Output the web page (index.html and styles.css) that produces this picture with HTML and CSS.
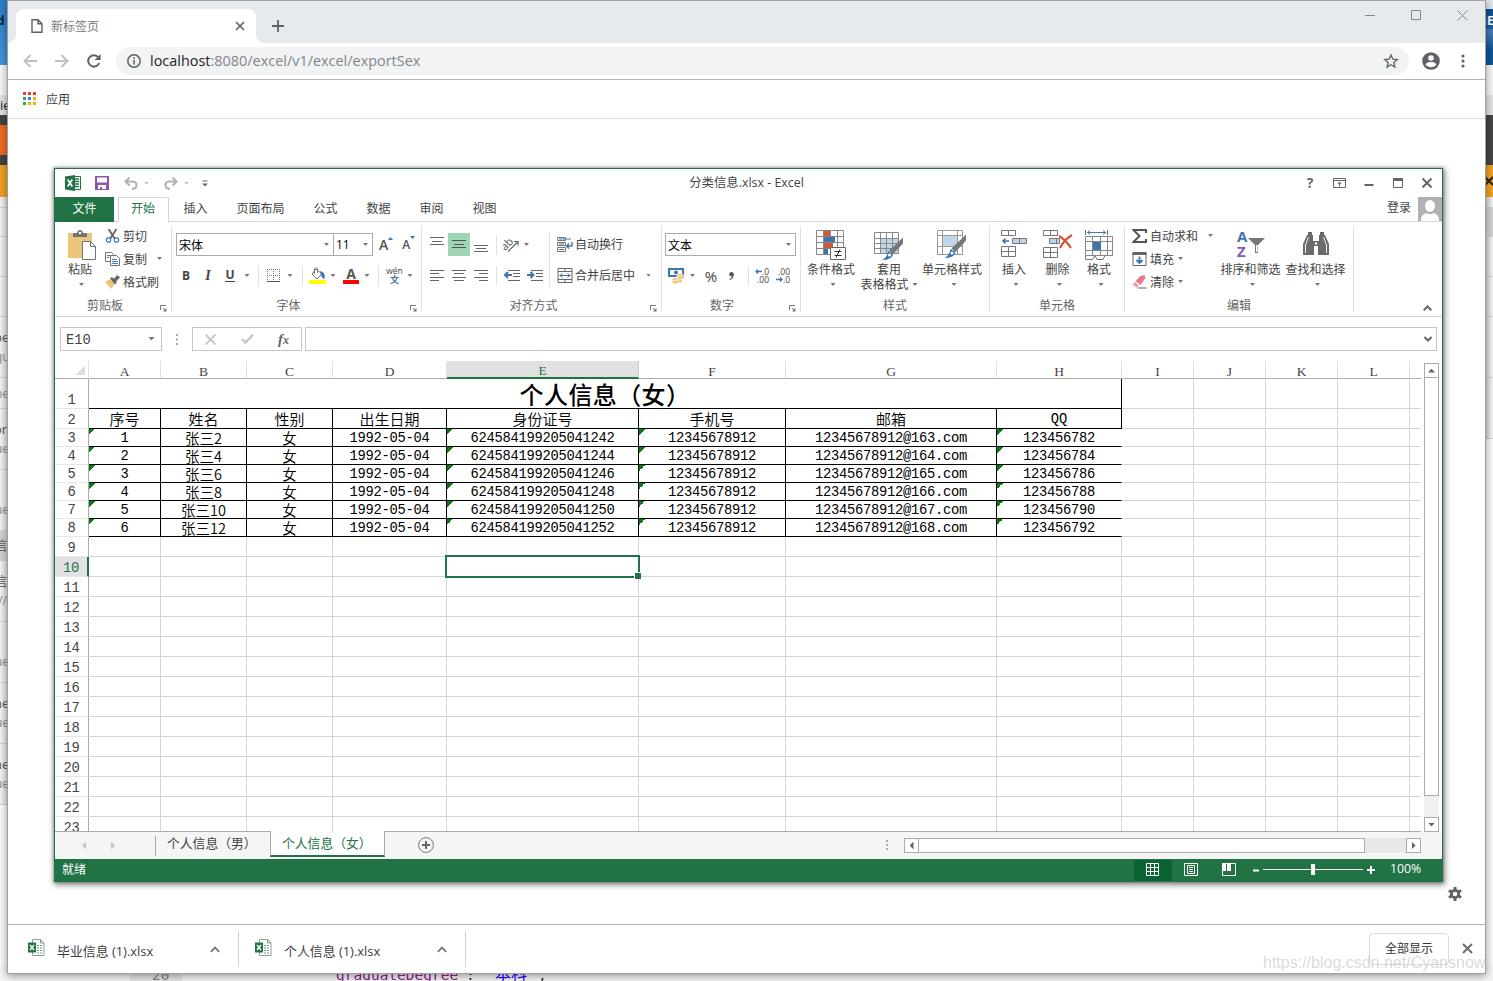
FILE: index.html
```html
<!DOCTYPE html>
<html lang="zh-CN">
<head>
  <meta charset="utf-8"/>
  <title>新标签页</title>
  <link rel="stylesheet" href="styles.css">
</head>
<body>
<div class="desktop">

  <!-- Windows behind the browser -->
  <div class="behind behind-left">
    <div class="b-blue">d</div>
    <div class="b-pale"></div>
    <div class="b-tool">ie</div>
    <div class="b-dark"></div>
    <div class="b-orange"></div>
    <div class="b-dark"></div>
    <div class="b-amber"></div>
    <div class="b-row h10"></div>
    <div class="b-row h29"></div>
    <div class="b-row h40"></div>
    <div class="b-row h40"></div>
    <div class="b-row h61"><b>pe</b><span>qu</span></div>
    <div class="b-row h31"><span>ne</span></div>
    <div class="b-row h61"><b>or</b><span>ue</span></div>
    <div class="b-row h61"><i></i><span>ue</span></div>
    <div class="b-row h30 sel"><b>信息</b></div>
    <div class="b-row h61"><b>信息</b><span>://</span></div>
    <div class="b-row h61"><i></i><span>ue</span></div>
    <div class="b-row h61"><b>ne</b><span>ue</span></div>
    <div class="b-row h61"><b>he</b><span>ue</span></div>
  </div>
  <div class="behind behind-right">
    <div class="b-blue deep">hE</div>
    <div class="b-pale"></div>
    <div class="b-tool"></div>
    <div class="b-dark tall"></div>
    <div class="b-amber"><svg width="8" height="10" viewBox="0 0 8 10"><path d="M0 1l8 8M8 1L0 9" stroke="#222" stroke-width="2"/></svg></div>
    <div class="b-row h10"></div>
    <div class="b-row h29 sel"></div>
    <div class="b-row h40"></div>
    <div class="b-row h40"></div>
    <div class="b-row h61"></div>
    <div class="b-row h61"></div>
  </div>
  <div class="behind behind-bottom">
    <span class="code-no">20</span>
    <span class="code-key">graduateDegree</span>
    <span class="code-colon">:</span>
    <span class="code-val">本科</span>
    <span>,</span>
  </div>

  <!-- Browser window -->
  <div class="browser">
    <div class="tabstrip">
      <div class="tab">
        <svg class="page-icon" width="12" height="14" viewBox="0 0 12 14"><path d="M1 .8h6l4 4v8.4H1zM7 .8v4h4" fill="none" stroke="#5f6368" stroke-width="1.4"/></svg>
        <span class="tab-title">新标签页</span>
        <svg width="10" height="10" viewBox="0 0 10 10"><path d="M1 1l8 8M9 1L1 9" stroke="#5f6368" stroke-width="1.7"/></svg>
      </div>
      <svg class="new-tab" width="12" height="12" viewBox="0 0 12 12"><path d="M6 0v12M0 6h12" stroke="#5f6368" stroke-width="1.8"/></svg>
      <div class="win-controls">
        <svg width="11" height="11" viewBox="0 0 11 11"><path d="M0 5.5h10" stroke="#888"/></svg>
        <svg width="11" height="11" viewBox="0 0 11 11"><path d="M.5.5h9v9h-9z" fill="none" stroke="#888"/></svg>
        <svg width="11" height="11" viewBox="0 0 11 11"><path d="M.5.5l10 10M10.5.5l-10 10" stroke="#888"/></svg>
      </div>
    </div>

    <div class="toolbar">
      <svg width="14" height="14" viewBox="0 0 14 14"><path d="M14 7H1.5M7.5 1L1.5 7l6 6" fill="none" stroke="#bdbfc1" stroke-width="1.9"/></svg>
      <svg width="14" height="14" viewBox="0 0 14 14"><path d="M0 7h12.5M6.5 1l6 6-6 6" fill="none" stroke="#bdbfc1" stroke-width="1.9"/></svg>
      <svg width="14" height="14" viewBox="0 0 14 14"><path d="M12.2 9A5.7 5.7 0 1 1 11.4 3.4" fill="none" stroke="#5f6368" stroke-width="2"/><path d="M13.6 0v6H7.6z" fill="#5f6368"/></svg>
      <div class="omnibox">
        <svg width="14" height="14" viewBox="0 0 14 14"><circle cx="7" cy="7" r="6.2" fill="none" stroke="#5f6368" stroke-width="1.5"/><path d="M7 6v4.5M7 3.2v1.7" stroke="#5f6368" stroke-width="1.6"/></svg>
        <span class="url">localhost<em>:8080/excel/v1/excel/exportSex</em></span>
        <svg width="16" height="16" viewBox="0 0 24 24"><path d="M12 3l2.7 6.3 6.8.6-5.2 4.5 1.6 6.6L12 17.5 6.1 21l1.6-6.6L2.5 9.9l6.8-.6z" fill="none" stroke="#5f6368" stroke-width="2"/></svg>
      </div>
      <svg class="profile" width="18" height="18" viewBox="0 0 18 18"><circle cx="9" cy="9" r="8.8" fill="#5f6368"/><circle cx="9" cy="6" r="2.8" fill="#fff"/><path d="M3.5 12.5c1.2-1.9 3.4-2.5 5.5-2.5s4.3.6 5.5 2.5c-1.3 1.8-3.3 2.8-5.5 2.8s-4.2-1-5.5-2.8z" fill="#fff"/></svg>
      <svg class="kebab" width="4" height="14" viewBox="0 0 4 14"><g fill="#5f6368"><circle cx="2" cy="2" r="1.6"/><circle cx="2" cy="7" r="1.6"/><circle cx="2" cy="12" r="1.6"/></g></svg>
    </div>

    <div class="bookmarks">
      <svg width="13" height="13" viewBox="0 0 13 13"><path d="M0 0h3v3H0zM5 0h3v3H5zM10 0h3v3h-3z" fill="#ea4335"/><path d="M0 5h3v3H0zM0 10h3v3H0z" fill="#34a853"/><path d="M5 5h3v3H5z" fill="#1a89f4"/><path d="M10 5h3v3h-3zM5 10h3v3H5zM10 10h3v3h-3z" fill="#fbaf05"/></svg>
      <span>应用</span>
    </div>

    <div class="page">
      <!-- Excel window -->
      <div class="excel">
        <div class="titlebar">
          <div class="quick">
            <svg width="16" height="16" viewBox="0 0 16 16"><path d="M8 1.5h7.5v13H8z" fill="#fff" stroke="#217346"/><path d="M10 4h4M10 6.5h4M10 9h4M10 11.5h4" stroke="#217346" stroke-width="1.3"/><path d="M0 1.5L10 0v16L0 14.5z" fill="#217346"/><path d="M2.7 4.5l4.6 7M7.3 4.5l-4.6 7" stroke="#fff" stroke-width="1.7"/></svg>
            <svg width="14" height="14" viewBox="0 0 14 14"><path d="M0 0h14v14H0z" fill="#8a57ab"/><path d="M2 1.5h10v5H2zM3 9h8v4H3z" fill="#fff"/><path d="M5 11h2v2H5z" fill="#8a57ab"/></svg>
            <svg width="14" height="13" viewBox="0 0 14 13"><path d="M5.5.5L1.5 4.5l4 4M1.5 4.5h7q4 0 4 3.5T8 12" fill="none" stroke="#b3b3b3" stroke-width="2.1"/></svg>
            <i class="arrow pale"></i>
            <svg width="14" height="13" viewBox="0 0 14 13"><path d="M8.5.5l4 4-4 4M12.5 4.5h-7q-4 0-4 3.5T6 12" fill="none" stroke="#b3b3b3" stroke-width="2.1"/></svg>
            <i class="arrow pale"></i>
            <svg width="6" height="7" viewBox="0 0 6 7"><path d="M.5 1h5" stroke="#666"/><path d="M0 3.5h6l-3 3z" fill="#666"/></svg>
          </div>
          <div class="book-name">分类信息.xlsx - Excel</div>
          <div class="excel-controls">
            <span class="help">?</span>
            <svg width="13" height="10" viewBox="0 0 13 10"><path d="M.5.5h12v9H.5zM.5 2.5h12M6.5 8.5V4M4.5 6l2-2 2 2" fill="none" stroke="#666"/></svg>
            <svg width="10" height="10" viewBox="0 0 10 10"><path d="M.5 7h9" stroke="#666" stroke-width="2"/></svg>
            <svg width="10" height="10" viewBox="0 0 10 10"><path d="M.5.5h9v9h-9z" fill="none" stroke="#666"/><path d="M0 0h10v3H0z" fill="#666"/></svg>
            <svg width="10" height="10" viewBox="0 0 10 10"><path d="M.5.5l9 9M9.5.5l-9 9" stroke="#666" stroke-width="2"/></svg>
          </div>
        </div>

        <div class="ribbon-tabs">
          <span class="file">文件</span>
          <span class="current">开始</span>
          <span>插入</span>
          <span class="wide">页面布局</span>
          <span>公式</span>
          <span>数据</span>
          <span>审阅</span>
          <span>视图</span>
          <div class="login">登录</div>
          <svg width="24" height="24" viewBox="0 0 24 24"><path d="M0 0h24v24H0z" fill="#b1b1b1"/><ellipse cx="12" cy="9" rx="5" ry="6" fill="#fff"/><path d="M3 24c0-5 2-7 5.5-8q3.5 2.5 7 0c3.5 1 5.5 3 5.5 8z" fill="#fff"/></svg>
        </div>

        <div class="ribbon">
          <!-- Clipboard -->
          <div class="group g-clip">
            <div class="group-body">
              <div class="big">
                <svg width="28" height="30" viewBox="0 0 28 30"><path d="M0 3h24v25H0z" fill="#ecc57c"/><path d="M5 7V3h4c0-4 6-4 6 0h4v4z" fill="#737373"/><circle cx="12" cy="3" r="1.3" fill="#fff"/><path d="M14.5 11.5h8l5 5v13h-13z" fill="#fff" stroke="#737373"/><path d="M22.5 11.5v5h5" fill="none" stroke="#737373"/></svg>
                <span>粘贴</span><i class="arrow"></i>
              </div>
              <div class="small-list">
                <div><svg width="14" height="14" viewBox="0 0 14 14"><path d="M3 0l6.5 10M11 0L4.5 10" stroke="#666" stroke-width="1.9"/><circle cx="3" cy="11" r="2.2" fill="none" stroke="#4a7eb5" stroke-width="1.3"/><circle cx="11" cy="11" r="2.2" fill="none" stroke="#4a7eb5" stroke-width="1.3"/></svg><span>剪切</span></div>
                <div><svg width="15" height="14" viewBox="0 0 15 14"><path d="M.5.5h6l2 2v7h-8z" fill="#fff" stroke="#737373"/><path d="M5.5 3.5h6l3 3v7h-9z" fill="#fff" stroke="#737373"/><path d="M2 3.5h3M2 5.5h2M7 7.5h5M7 9.5h6M7 11.5h6" stroke="#4a7eb5"/></svg><span>复制</span><i class="arrow"></i></div>
                <div><svg width="15" height="14" viewBox="0 0 15 14"><path d="M0 7l5-3 5 5-4 5z" fill="#ecc57c"/><path d="M5 3.5l2-1.5 5 5-2 2.5zM8.5 4l4-4L15 2.5l-4 4z" fill="#666"/></svg><span>格式刷</span></div>
              </div>
            </div>
            <div class="group-name">剪贴板<svg class="launcher" width="7" height="7" viewBox="0 0 7 7"><path d="M.5 5V.5H6M3 3l3 3" fill="none" stroke="#777"/><path d="M6.5 3v3.5H3z" fill="#777"/></svg></div>
          </div>

          <!-- Font -->
          <div class="group g-font">
            <div class="group-body col">
              <div class="row font-row">
                <div class="combo"><span>宋体</span><i class="arrow"></i></div>
                <div class="combo"><span>11</span><i class="arrow"></i></div>
                <span class="grow">A<svg width="5" height="3" viewBox="0 0 5 3"><path d="M0 3h5L2.5 0z" fill="#3f74ae"/></svg></span>
                <span class="grow less">A<svg width="5" height="3" viewBox="0 0 5 3"><path d="M0 0h5L2.5 3z" fill="#3f74ae"/></svg></span>
              </div>
              <div class="row style-row">
                <b>B</b><b class="ital">I</b><b class="under">U</b><i class="arrow"></i><i class="sep"></i>
                <svg width="13" height="13" viewBox="0 0 13 13"><path d="M.5 0v13M6.5 0v13M12.5 0v13M0 .5h13M0 6.5h13" stroke="#777" stroke-dasharray="1 1"/><path d="M0 12.5h13" stroke="#555"/></svg>
                <i class="arrow"></i><i class="sep"></i>
                <svg width="17" height="17" viewBox="0 0 17 17"><path d="M7 2l6 5-5 5-5-5z" fill="#fff" stroke="#737373"/><path d="M5.5 7V2q1.5-3 3 0v4" fill="none" stroke="#737373"/><path d="M11 4q6 1 4.5 8Q12 11 11 4z" fill="#3f74ae"/><path d="M0 13h17v4H0z" fill="#ff0"/></svg>
                <i class="arrow"></i>
                <span class="font-colour">A</span>
                <i class="arrow"></i><i class="sep"></i>
                <span class="phonetic">wén<em>文</em></span><i class="arrow"></i>
              </div>
            </div>
            <div class="group-name">字体<svg class="launcher" width="7" height="7" viewBox="0 0 7 7"><path d="M.5 5V.5H6M3 3l3 3" fill="none" stroke="#777"/><path d="M6.5 3v3.5H3z" fill="#777"/></svg></div>
          </div>

          <!-- Alignment -->
          <div class="group g-align">
            <div class="group-body">
              <div class="align-grid">
                <span class="cell"><svg width="14" height="15" viewBox="0 0 14 15"><path d="M0 .5h14M2 4.5h10M0 7.5h14" stroke="#666"/></svg></span>
                <span class="cell on"><svg width="14" height="15" viewBox="0 0 14 15"><path d="M0 3.5h14M2 7.5h10M0 10.5h14" stroke="#555"/></svg></span>
                <span class="cell"><svg width="14" height="15" viewBox="0 0 14 15"><path d="M0 8.5h14M2 11.5h10M0 14.5h14" stroke="#666"/></svg></span>
                <i class="sep"></i>
                <span class="cell"><svg width="17" height="16" viewBox="0 0 17 16"><g transform="rotate(-45 7 8)"><text x="-1" y="9" class="ab">ab</text></g><path d="M5 14.5L15 4.5M11 4.5h4v4" fill="none" stroke="#666" stroke-width="1.2"/></svg></span>
                <i class="arrow lead"></i>
                <span class="cell"><svg width="14" height="11" viewBox="0 0 14 11"><path d="M0 .5h14M0 3.5h9M0 7.5h14M0 10.5h9" stroke="#666"/></svg></span>
                <span class="cell"><svg width="14" height="11" viewBox="0 0 14 11"><path d="M0 .5h14M2 3.5h10M0 7.5h14M2 10.5h10" stroke="#666"/></svg></span>
                <span class="cell"><svg width="14" height="11" viewBox="0 0 14 11"><path d="M0 .5h14M5 3.5h9M0 7.5h14M5 10.5h9" stroke="#666"/></svg></span>
                <i class="sep"></i>
                <span class="cell"><svg width="16" height="11" viewBox="0 0 16 11"><path d="M4 .5h12M9 3.5h7M9 6.5h7M4 10.5h12" stroke="#666"/><path d="M8 5H1M4 2L1 5l3 3" fill="none" stroke="#3f74ae" stroke-width="2"/></svg></span>
                <span class="cell"><svg width="16" height="11" viewBox="0 0 16 11"><path d="M4 .5h12M9 3.5h7M9 6.5h7M4 10.5h12" stroke="#666"/><path d="M0 5h6M3.5 2l3 3-3 3" fill="none" stroke="#3f74ae" stroke-width="2"/></svg></span>
              </div>
              <div class="wrap-list">
                <div><svg width="16" height="15" viewBox="0 0 16 15"><path d="M.5.5h8v3h-8zM.5 5.5h8v3h-8zM.5 10.5h8v4h-8z" fill="#fff" stroke="#777"/><path d="M2 2h12M2 7h5M2 12.5h5" stroke="#3f74ae"/><path d="M15 5v4h-5M12 6.5L9.5 9l2.5 2.5" fill="none" stroke="#3f74ae" stroke-width="1.4"/></svg><span>自动换行</span></div>
                <div><svg width="15" height="15" viewBox="0 0 15 15"><path d="M.5.5h14v14H.5zM.5 3.5h14M.5 11.5h14M7.5.5v3M7.5 11.5v3" fill="#fff" stroke="#666"/><path d="M2 7.5h11M5 5.5l-2.500 2L5 9.500M10 5.500l2.500 2-2.500 2" fill="none" stroke="#3f74ae"/></svg><span>合并后居中</span><i class="arrow"></i></div>
              </div>
            </div>
            <div class="group-name">对齐方式<svg class="launcher" width="7" height="7" viewBox="0 0 7 7"><path d="M.5 5V.5H6M3 3l3 3" fill="none" stroke="#777"/><path d="M6.5 3v3.5H3z" fill="#777"/></svg></div>
          </div>

          <!-- Number -->
          <div class="group g-number">
            <div class="group-body col">
              <div class="row"><div class="combo format"><span>文本</span><i class="arrow"></i></div></div>
              <div class="row number-row">
                <svg width="16" height="16" viewBox="0 0 16 16"><path d="M0 0h16v9H0z" fill="#3f74ae"/><path d="M2 2h12v5H2z" fill="#fff"/><circle cx="8" cy="4.5" r="2" fill="#3f74ae"/><g fill="#ecc57c" stroke="#fff" stroke-width=".6"><ellipse cx="12" cy="7.5" rx="3.6" ry="1.8"/><ellipse cx="12" cy="10" rx="3.6" ry="1.8"/><ellipse cx="7.5" cy="11.5" rx="3.6" ry="1.8"/><ellipse cx="11" cy="13" rx="3.6" ry="1.8"/><ellipse cx="7.5" cy="14" rx="3.6" ry="1.8"/></g></svg>
                <i class="arrow"></i>
                <span class="percent">%</span>
                <svg width="5" height="8" viewBox="0 0 5 8"><circle cx="2.5" cy="2.3" r="2.2" fill="#555"/><path d="M4.2 2q0 4-3.5 5.5" fill="none" stroke="#555" stroke-width="1.2"/></svg>
                <i class="sep"></i>
                <span class="decimals"><span><svg width="7" height="5" viewBox="0 0 7 5"><path d="M7 2.5H1M3 .5l-2 2 2 2" fill="none" stroke="#3f74ae" stroke-width="1.3"/></svg>.0</span><span>.00</span></span>
                <span class="decimals"><span>.00</span><span><svg width="7" height="5" viewBox="0 0 7 5"><path d="M0 2.5h6M4 .5l2 2-2 2" fill="none" stroke="#3f74ae" stroke-width="1.3"/></svg>.0</span></span>
              </div>
            </div>
            <div class="group-name">数字<svg class="launcher" width="7" height="7" viewBox="0 0 7 7"><path d="M.5 5V.5H6M3 3l3 3" fill="none" stroke="#777"/><path d="M6.5 3v3.5H3z" fill="#777"/></svg></div>
          </div>

          <!-- Styles -->
          <div class="group g-styles">
            <div class="group-body">
              <div class="big">
                <svg width="30" height="30" viewBox="0 0 30 30"><path d="M.5.5h27v24H.5zM.5 6.5h27M.5 12.5h27M.5 18.5h27M7.5.5v24M14.5.5v24M21.5.5v24" fill="#fff" stroke="#888"/><path d="M8 1h6v5H8zM8 13h9v5H8z" fill="#d65532"/><path d="M8 7h11v5H8zM8 19h4v5H8z" fill="#3f74ae"/><path d="M14.5 17.5h15v12h-15z" fill="#fff" stroke="#666"/><path d="M18.5 21.5h7M18.5 25.5h7M24 19.5l-4 8" stroke="#333"/></svg>
                <span>条件格式</span><i class="arrow"></i>
              </div>
              <div class="big">
                <svg width="30" height="30" viewBox="0 0 30 30"><path d="M7 9h18v15H7z" fill="#c0d4ea"/><path d="M.5 2.5h24v21H.5zM.5 8.5h24M.5 13.5h24M.5 18.5h24M6.5 2.5v21M12.5 2.5v21M18.5 2.5v21" fill="none" stroke="#888"/><path d="M29 7.5v6L19 24l-4-3.5z" fill="#777"/><path d="M14 21l5 3q-1 6-11 6 5-2 6-9z" fill="#3f74ae"/><circle cx="15.5" cy="25" r="1.5" fill="#fff"/></svg>
                <span>套用</span><span class="second">表格格式<i class="arrow"></i></span>
              </div>
              <div class="big">
                <svg width="30" height="30" viewBox="0 0 30 30"><path d="M.5.5h25v24H.5zM.5 5.5h25M.5 16.5h25M5.5.5v24M20.5.5v24" fill="#fff" stroke="#999"/><path d="M6 6h14v10H6z" fill="#c0d4ea"/><path d="M29 4.5v6L18.5 22l-4-3.5z" fill="#777"/><path d="M13.5 19l5 3q-1 6-11 6 5-2 6-9z" fill="#3f74ae"/><circle cx="15" cy="23" r="1.5" fill="#fff"/></svg>
                <span>单元格样式</span><i class="arrow"></i>
              </div>
            </div>
            <div class="group-name">样式</div>
          </div>

          <!-- Cells -->
          <div class="group g-cells">
            <div class="group-body">
              <div class="big">
                <svg width="26" height="30" viewBox="0 0 26 30"><path d="M.5.5h14v5H.5zM7.5.5v5M.5 16.5h14v10H.5zM.5 21.5h14M7.5 16.5v10" fill="#fff" stroke="#777"/><path d="M11.5 8.5h14v5h-14zM18.5 8.5v5" fill="#c0d4ea" stroke="#777"/><path d="M8 11H2M4.5 8.5L2 11l2.5 2.5" fill="none" stroke="#3f74ae" stroke-width="1.6"/></svg>
                <span>插入</span><i class="arrow"></i>
              </div>
              <div class="big">
                <svg width="30" height="30" viewBox="0 0 30 30"><path d="M.5.5h14v5H.5zM7.5.5v5M.5 17.5h14v10H.5zM.5 22.5h14M7.5 17.5v10" fill="#fff" stroke="#777"/><path d="M6.5 8.5h10v5h-10zM13.5 8.5v5" fill="#c0d4ea" stroke="#777"/><path d="M16 6q7 4 12 12M29 5q-8 5-12 13" fill="none" stroke="#d65532" stroke-width="2.2"/></svg>
                <span>删除</span><i class="arrow"></i>
              </div>
              <div class="big">
                <svg width="28" height="30" viewBox="0 0 28 30"><path d="M.5 0v5M22.5 0v5M2 2.5h19M5 .5l-2.500 2L5 4.500M18 .5l2.500 2-2.500 2" fill="none" stroke="#3f74ae"/><path d="M.5 6.5h27v19H.5zM.5 11.5h27M.5 20.5h27M7.5 6.5v19M15.5 6.5v19M22.5 6.5v19" fill="#fff" stroke="#888"/><path d="M8 12h8v8H8z" fill="#3f74ae"/><path d="M.5 26v3.5h7l2.5-4 2 4h6l2-4" fill="none" stroke="#777"/></svg>
                <span>格式</span><i class="arrow"></i>
              </div>
            </div>
            <div class="group-name">单元格</div>
          </div>

          <!-- Editing -->
          <div class="group g-edit">
            <div class="group-body">
              <div class="small-list">
                <div><svg width="15" height="14" viewBox="0 0 15 14"><path d="M14 4V1H1.5l6 6-6 6H14v-3" fill="none" stroke="#555" stroke-width="2"/></svg><span>自动求和</span><i class="arrow far"></i></div>
                <div><svg width="14" height="14" viewBox="0 0 14 14"><path d="M.5.5h13v13H.5z" fill="#fff" stroke="#666"/><path d="M0 0h14v3H0z" fill="#666"/><path d="M7 4.5V11M4 8l3 3 3-3" fill="none" stroke="#3f74ae" stroke-width="1.8"/></svg><span>填充</span><i class="arrow"></i></div>
                <div><svg width="14" height="14" viewBox="0 0 14 14"><path d="M8 1l4-1 1 3-5 7-5-4z" fill="#e8788c"/><path d="M2.5 7L6.5 10.5 4 12.5 0 9.5z" fill="#ef9aaa"/><path d="M5 13h9" stroke="#666"/></svg><span>清除</span><i class="arrow"></i></div>
              </div>
              <div class="big">
                <svg width="30" height="30" viewBox="0 0 30 30"><text x="1" y="12" class="az a">A</text><text x="1" y="27" class="az z">Z</text><path d="M12 8h17l-7 7v8h-3v-8z" fill="#777"/><path d="M20 15h1.5v7H20z" fill="#fff"/></svg>
                <span>排序和筛选</span><i class="arrow"></i>
              </div>
              <div class="big">
                <svg width="26" height="30" viewBox="0 0 26 30"><path d="M0 25V14L4 5h6v6h6V5h6l4 9v11H15v-9h-4v9z" fill="#6b6b6b"/><path d="M5 2h4v4H5zM17 2h4v4h-4z" fill="#6b6b6b"/><path d="M2.5 23v-8l3-8M23.5 23v-8l-3-8" fill="none" stroke="#fff" stroke-width=".9"/><circle cx="13" cy="13.5" r="1.2" fill="#fff"/></svg>
                <span>查找和选择</span><i class="arrow"></i>
              </div>
            </div>
            <div class="group-name">编辑</div>
          </div>
          <svg class="collapse" width="9" height="6" viewBox="0 0 9 6"><path d="M.7 5.3L4.5 1.5l3.8 3.8" fill="none" stroke="#666" stroke-width="2"/></svg>
        </div>

        <div class="formula-bar">
          <div class="name-box"><span>E10</span><i class="arrow"></i></div>
          <svg class="grip" width="2" height="11" viewBox="0 0 2 11"><path d="M0 0h2v2H0zM0 4.5h2v2H0zM0 9h2v2H0z" fill="#aaa"/></svg>
          <div class="fx-box">
            <svg width="11" height="11" viewBox="0 0 11 11"><path d="M.5.5l10 10M10.5.5l-10 10" stroke="#c4c4c4" stroke-width="1.8"/></svg>
            <svg width="13" height="10" viewBox="0 0 13 10"><path d="M1 5l3.5 3.5L12 .8" fill="none" stroke="#c4c4c4" stroke-width="2.3"/></svg>
            <span class="fx">f<small>x</small></span>
          </div>
          <div class="formula-input"><svg width="8" height="6" viewBox="0 0 8 6"><path d="M.5 1L4 4.5 7.5 1" fill="none" stroke="#666" stroke-width="2"/></svg></div>
        </div>

        <div class="sheet-area">
          <div class="sheet-clip">
            <table class="sheet">
              <colgroup><col class="c-no"><col class="c-72"><col class="c-86"><col class="c-86"><col class="c-114"><col class="c-192"><col class="c-147"><col class="c-211"><col class="c-125"><col class="c-72"><col class="c-72"><col class="c-72"><col class="c-72"><col class="c-11"></colgroup>
              <tr class="letters"><th class="corner"></th><th>A</th><th>B</th><th>C</th><th>D</th><th class="active">E</th><th>F</th><th>G</th><th>H</th><th>I</th><th>J</th><th>K</th><th>L</th><th></th></tr>
              <tr class="r-title"><th>1</th><td colspan="8" class="ink">个人信息（女）</td><td></td><td></td><td></td><td></td><td></td></tr>
              <tr class="r-head"><th>2</th><td class="ink">序号</td><td class="ink">姓名</td><td class="ink">性别</td><td class="ink">出生日期</td><td class="ink">身份证号</td><td class="ink">手机号</td><td class="ink">邮箱</td><td class="ink qq">QQ</td><td></td><td></td><td></td><td></td><td></td></tr>
              <tr class="r-data"><th>3</th><td class="flag">1</td><td class="cn">张三2</td><td class="cn">女</td><td>1992-05-04</td><td class="flag">624584199205041242</td><td class="flag">12345678912</td><td>12345678912@163.com</td><td class="flag last">123456782</td><td></td><td></td><td></td><td></td><td></td></tr>
              <tr class="r-data"><th>4</th><td class="flag">2</td><td class="cn">张三4</td><td class="cn">女</td><td>1992-05-04</td><td class="flag">624584199205041244</td><td class="flag">12345678912</td><td>12345678912@164.com</td><td class="flag last">123456784</td><td></td><td></td><td></td><td></td><td></td></tr>
              <tr class="r-data"><th>5</th><td class="flag">3</td><td class="cn">张三6</td><td class="cn">女</td><td>1992-05-04</td><td class="flag">624584199205041246</td><td class="flag">12345678912</td><td>12345678912@165.com</td><td class="flag last">123456786</td><td></td><td></td><td></td><td></td><td></td></tr>
              <tr class="r-data"><th>6</th><td class="flag">4</td><td class="cn">张三8</td><td class="cn">女</td><td>1992-05-04</td><td class="flag">624584199205041248</td><td class="flag">12345678912</td><td>12345678912@166.com</td><td class="flag last">123456788</td><td></td><td></td><td></td><td></td><td></td></tr>
              <tr class="r-data"><th>7</th><td class="flag">5</td><td class="cn">张三10</td><td class="cn">女</td><td>1992-05-04</td><td class="flag">624584199205041250</td><td class="flag">12345678912</td><td>12345678912@167.com</td><td class="flag last">123456790</td><td></td><td></td><td></td><td></td><td></td></tr>
              <tr class="r-data"><th>8</th><td class="flag">6</td><td class="cn">张三12</td><td class="cn">女</td><td>1992-05-04</td><td class="flag">624584199205041252</td><td class="flag">12345678912</td><td>12345678912@168.com</td><td class="flag last">123456792</td><td></td><td></td><td></td><td></td><td></td></tr>
              <tr><th>9</th><td></td><td></td><td></td><td></td><td></td><td></td><td></td><td></td><td></td><td></td><td></td><td></td><td></td></tr>
              <tr><th class="active">10</th><td></td><td></td><td></td><td></td><td class="selected"><i></i></td><td></td><td></td><td></td><td></td><td></td><td></td><td></td><td></td></tr>
              <tr><th>11</th><td></td><td></td><td></td><td></td><td></td><td></td><td></td><td></td><td></td><td></td><td></td><td></td><td></td></tr>
              <tr><th>12</th><td></td><td></td><td></td><td></td><td></td><td></td><td></td><td></td><td></td><td></td><td></td><td></td><td></td></tr>
              <tr><th>13</th><td></td><td></td><td></td><td></td><td></td><td></td><td></td><td></td><td></td><td></td><td></td><td></td><td></td></tr>
              <tr><th>14</th><td></td><td></td><td></td><td></td><td></td><td></td><td></td><td></td><td></td><td></td><td></td><td></td><td></td></tr>
              <tr><th>15</th><td></td><td></td><td></td><td></td><td></td><td></td><td></td><td></td><td></td><td></td><td></td><td></td><td></td></tr>
              <tr><th>16</th><td></td><td></td><td></td><td></td><td></td><td></td><td></td><td></td><td></td><td></td><td></td><td></td><td></td></tr>
              <tr><th>17</th><td></td><td></td><td></td><td></td><td></td><td></td><td></td><td></td><td></td><td></td><td></td><td></td><td></td></tr>
              <tr><th>18</th><td></td><td></td><td></td><td></td><td></td><td></td><td></td><td></td><td></td><td></td><td></td><td></td><td></td></tr>
              <tr><th>19</th><td></td><td></td><td></td><td></td><td></td><td></td><td></td><td></td><td></td><td></td><td></td><td></td><td></td></tr>
              <tr><th>20</th><td></td><td></td><td></td><td></td><td></td><td></td><td></td><td></td><td></td><td></td><td></td><td></td><td></td></tr>
              <tr><th>21</th><td></td><td></td><td></td><td></td><td></td><td></td><td></td><td></td><td></td><td></td><td></td><td></td><td></td></tr>
              <tr><th>22</th><td></td><td></td><td></td><td></td><td></td><td></td><td></td><td></td><td></td><td></td><td></td><td></td><td></td></tr>
              <tr><th>23</th><td></td><td></td><td></td><td></td><td></td><td></td><td></td><td></td><td></td><td></td><td></td><td></td><td></td></tr>
            </table>
          </div>
          <div class="vscroll">
            <div class="scroll-btn"><i class="tri up"></i></div>
            <div class="vthumb"></div>
            <div class="vtrack"></div>
            <div class="scroll-btn"><i class="tri down"></i></div>
          </div>
        </div>

        <div class="sheet-tabs">
          <div class="tab-nav"><i class="tri left faint"></i><i class="tri right faint"></i></div>
          <div class="sheet-tab">个人信息（男）</div>
          <div class="sheet-tab current">个人信息（女）</div>
          <svg class="add-sheet" width="16" height="16" viewBox="0 0 16 16"><circle cx="8" cy="8" r="7.4" fill="none" stroke="#777"/><path d="M8 4v8M4 8h8" stroke="#666" stroke-width="2"/></svg>
          <svg class="grip" width="2" height="10" viewBox="0 0 2 10"><path d="M0 0h2v2H0zM0 4h2v2H0zM0 8h2v2H0z" fill="#aaa"/></svg>
          <div class="hscroll">
            <div class="scroll-btn"><i class="tri left"></i></div>
            <div class="hthumb"></div>
            <div class="htrack"></div>
            <div class="scroll-btn"><i class="tri right"></i></div>
          </div>
        </div>

        <div class="status">
          <span class="ready">就绪</span>
          <span class="view on"><svg width="13" height="13" viewBox="0 0 13 13"><path d="M.5.5h12v12H.5zM.5 4.5h12M.5 8.5h12M4.5.5v12M8.5.5v12" fill="none" stroke="#fff"/></svg></span>
          <span class="view"><svg width="14" height="13" viewBox="0 0 14 13"><path d="M.5.5h13v12H.5zM3.5 2.5h7v8h-7zM5 4.5h4M5 6.5h4M5 8.5h4" fill="none" stroke="#fff"/></svg></span>
          <span class="view"><svg width="14" height="13" viewBox="0 0 14 13"><path d="M.5.5h13v12H.5z" fill="none" stroke="#fff"/><path d="M0 0h4v8H0zM5 0h4v8H5z" fill="#fff"/></svg></span>
          <svg class="zoom" width="124" height="12" viewBox="0 0 124 12"><path d="M1 6.5h6M115 6h8M119 2v8" stroke="#fff" stroke-width="2"/><path d="M11 5.5h100" stroke="#fff"/><path d="M59 0h4v11h-4z" fill="#fff"/></svg>
          <span class="percent-zoom">100%</span>
        </div>
      </div>

      <svg class="gear" width="14" height="14" viewBox="0 0 14 14"><circle cx="7" cy="7" r="3.7" fill="none" stroke="#5f6368" stroke-width="2.8"/><path d="M7 0v3M7 11v3M.9 3.5l2.6 1.5M10.5 9l2.6 1.5M.9 10.5L3.5 9M10.5 5l2.6-1.5" stroke="#5f6368" stroke-width="3"/></svg>
    </div>

    <!-- Downloads -->
    <div class="shelf">
      <div class="download">
        <svg width="17" height="17" viewBox="0 0 17 17"><path d="M4.5.5h8l3.5 3.5v12.5H4.5z" fill="#fff" stroke="#999"/><path d="M12.5.5V4H16M9 6.5h2M12 6.5h2M9 9h2M12 9h2M9 11.5h2M12 11.5h2M9 14h2M12 14h2" fill="none" stroke="#5da57c"/><path d="M0 3.5h8v10H0z" fill="#217346"/><path d="M2 6l4 5M6 6l-4 5" stroke="#fff" stroke-width="1.4"/></svg>
        <span>毕业信息 (1).xlsx</span>
        <svg width="10" height="7" viewBox="0 0 10 7"><path d="M.8 5.8L5 1.6l4.2 4.2" fill="none" stroke="#757575" stroke-width="1.8"/></svg>
      </div>
      <div class="download">
        <svg width="17" height="17" viewBox="0 0 17 17"><path d="M4.5.5h8l3.5 3.5v12.5H4.5z" fill="#fff" stroke="#999"/><path d="M12.5.5V4H16M9 6.5h2M12 6.5h2M9 9h2M12 9h2M9 11.5h2M12 11.5h2M9 14h2M12 14h2" fill="none" stroke="#5da57c"/><path d="M0 3.5h8v10H0z" fill="#217346"/><path d="M2 6l4 5M6 6l-4 5" stroke="#fff" stroke-width="1.4"/></svg>
        <span>个人信息 (1).xlsx</span>
        <svg width="10" height="7" viewBox="0 0 10 7"><path d="M.8 5.8L5 1.6l4.2 4.2" fill="none" stroke="#757575" stroke-width="1.8"/></svg>
      </div>
      <div class="show-all">全部显示</div>
      <svg width="11" height="11" viewBox="0 0 11 11"><path d="M1 1l9 9M10 1l-9 9" stroke="#6b6e72" stroke-width="1.9"/></svg>
    </div>
  </div>

  <div class="watermark">https://blog.csdn.net/Cyansnow</div>
</div>
</body>
</html>
```
FILE: styles.css
```css
:root {
  --green: #217346;
  --grid: #d4d4d4;
  --line: #d5d5d5;
  --text: #444;
}

* { box-sizing: border-box; }
body {
  margin: 0;
  font-family: "Open Sans", "Noto Sans CJK SC", sans-serif;
  font-size: 12px;
  color: var(--text);
}
svg { display: block; flex: none; }
i, em { font-style: normal; }

.desktop {
  position: relative;
  width: 1493px;
  height: 981px;
  overflow: hidden;
  background: #f0f0f0;
}

/* ---------- Windows behind ---------- */
.behind {
  position: absolute;
  overflow: hidden;
  background: #fafafa;
}
.behind-left { left: 0; top: 0; width: 8px; height: 981px; }
.behind-right { left: 1485px; top: 0; width: 8px; height: 981px; }
.behind-left div { white-space: nowrap; }
.b-blue { height: 65px; background: linear-gradient(#2e7cc8, #4294dd); color: #123; font-weight: 700; line-height: 42px; text-indent: -3px; }
.b-blue.deep { background: linear-gradient(#dfe5ec 9px, #0f5090 9px, #14599c 28px, #4d7db5 30px, #0f5595 50px); color: #fff; text-indent: -6px; }
.b-pale { height: 30px; background: #f5f5f5; }
.b-tool { height: 20px; background: #e2e2e2; color: #222; line-height: 20px; font-size: 13px; }
.b-dark { height: 10px; background: #444; }
.b-dark.tall { height: 50px; }
.b-orange { height: 30px; background: #ee6a22; }
.b-amber { height: 32px; padding-top: 11px; background: #efa021; }
.b-row {
  display: flex;
  flex-direction: column;
  justify-content: center;
  border-bottom: 1px solid #d0d0d0;
  background: linear-gradient(90deg, #f4f4f4, #dedede);
  line-height: 19px;
}
.behind-right .b-row { background: linear-gradient(90deg, #d2d2d2, #f4f4f4); }
.b-row b { font-weight: 400; font-size: 13px; color: #555; text-indent: -6px; }
.b-row span { font-size: 12px; color: #888; text-indent: -5px; }
.b-row i { height: 19px; }
.b-row.sel { background: #d2d2d2; }
.h10 { height: 11px; }
.h29 { height: 29px; }
.h30 { height: 30px; }
.h31 { height: 31px; }
.h40 { height: 40px; }
.h61 { height: 61px; }
.behind-bottom {
  display: grid;
  grid-template-columns: 52px 154px 130px 29px 43px 20px;
  left: 0;
  top: 965px;
  width: 1493px;
  height: 16px;
  padding-left: 130px;
  background: #f5f5f5;
  font: 14.5px/20px "DejaVu Sans Mono", "Noto Sans CJK SC", monospace;
  color: #333;
  white-space: nowrap;
}
.code-no { padding-left: 22px; background: #e6e6e6; color: #888; }
.code-key { grid-column: 3; color: #92278f; }
.code-val { color: #2a00ff; font-size: 16px; }

/* ---------- Browser ---------- */
.browser {
  position: absolute;
  left: 7px;
  top: 0;
  width: 1479px;
  height: 974px;
  display: flex;
  flex-direction: column;
  background: #fff;
  border: 1px solid #a0a0a0;
  box-shadow: 0 2px 8px rgba(0, 0, 0, .4);
}
.tabstrip {
  display: flex;
  height: 42px;
  padding-left: 8px;
  background: #e7eaed;
}
.tab {
  position: relative;
  display: flex;
  align-items: center;
  width: 240px;
  margin-top: 8px;
  padding: 0 11px 0 15px;
  border-radius: 8px 8px 0 0;
  background: #fff;
}
.tab::before,
.tab::after {
  content: "";
  position: absolute;
  bottom: 0;
  width: 8px;
  height: 8px;
}
.tab::before { left: -8px; background: radial-gradient(circle at 0 0, #e7eaed 7.5px, #fff 8px); }
.tab::after { right: -8px; background: radial-gradient(circle at 100% 0, #e7eaed 7.5px, #fff 8px); }
.tab-title { flex: 1; padding: 0 0 1px 8px; color: #777; }
.new-tab { margin: 19px 0 0 16px; }
.win-controls { display: flex; gap: 35px; margin: 9px 17px 0 auto; }

.toolbar {
  display: flex;
  align-items: center;
  gap: 18px;
  height: 37px;
  padding: 0 20px 0 15px;
  border-bottom: 1px solid #b6b4b6;
}
.omnibox {
  display: flex;
  align-items: center;
  flex: 1;
  height: 28px;
  margin: 0 -5px 0 -3px;
  padding: 0 10px 0 11px;
  border-radius: 14px;
  background: #f1f3f4;
}
.url { flex: 1; padding: 0 0 1px 9px; font: 14.4px "Open Sans", sans-serif; letter-spacing: .02px; color: #222; }
.url em { color: #80868b; }
.kebab { margin-left: 3px; }

.bookmarks {
  display: flex;
  align-items: center;
  gap: 10px;
  height: 39px;
  padding-left: 15px;
  border-bottom: 1px solid #dfe1e3;
  color: #3c4043;
}
.bookmarks svg { margin-top: -1px; }
.bookmarks span { margin-top: -1px; }

.page { flex: 1; padding: 49px 0 0 46px; }
.gear { margin: 5px 0 0 1394px; }

/* ---------- Excel frame ---------- */
.excel {
  width: 1389px;
  height: 714px;
  border: 1px solid var(--green);
  border-bottom: 0;
  background: #fff;
  box-shadow: 0 0 2px 1px rgba(0, 0, 0, .2), 1px 2px 6px 1px rgba(0, 0, 0, .45);
}
.titlebar {
  display: grid;
  grid-template-columns: 1fr auto 1fr;
  align-items: center;
  height: 28px;
}
.quick {
  display: grid;
  grid-template-columns: 34px 26px 20px 20px 20px 20px 12px;
  align-items: center;
  padding-left: 10px;
}
.quick svg:nth-child(2) { margin-left: -4px; }
.quick svg:nth-child(3), .quick svg:nth-child(5) { margin-left: -1px; }
.quick .arrow { margin-left: -1px; }
.quick svg:last-child { margin-left: -3px; }
.book-name { padding: 0 4px 2px 0; font-size: 12.4px; color: #444; }
.excel-controls {
  display: grid;
  grid-template-columns: repeat(5, 29.3px);
  place-items: center;
  justify-content: end;
}
.help { font: 700 14px/16px "Open Sans", sans-serif; color: #666; }

.arrow {
  display: block;
  width: 5px;
  height: 3px;
  background: #777;
  clip-path: polygon(0 0, 100% 0, 50% 100%);
  flex: none;
}
.arrow.pale { background: #bbb; }

.ribbon-tabs {
  display: flex;
  height: 25px;
  line-height: 23px;
  border-bottom: 1px solid var(--line);
}
.ribbon-tabs span { width: 53px; text-align: center; }
.ribbon-tabs .file { width: 59px; height: 25px; margin-right: 4px; background: var(--green); color: #fff; }
.ribbon-tabs .current {
  width: 51px;
  height: 25px;
  padding-right: 1px;
  border: 1px solid var(--line);
  border-bottom: 0;
  line-height: 21px;
  background: #fff;
  color: var(--green);
}
.ribbon-tabs .wide { width: 77px; }
.login { margin-left: auto; padding-right: 7px; line-height: 21px; }

/* ---------- Ribbon ---------- */
.ribbon {
  display: flex;
  height: 95px;
  padding-top: 4px;
  border-bottom: 1px solid var(--line);
}
.group {
  display: flex;
  flex-direction: column;
  height: 86px;
  border-right: 1px solid #e1e1e1;
}
.group-body { display: flex; height: 70px; }
.group-body.col { flex-direction: column; }
.group-name {
  position: relative;
  height: 17px;
  line-height: 22px;
  text-align: center;
  color: #666;
}
.launcher { position: absolute; right: 4px; bottom: 0; }
.g-clip { width: 117px; }
.g-clip .group-name { padding-right: 16px; }
.g-font { width: 250px; }
.g-font .group-name { padding-right: 16px; }
.g-align { width: 240px; }
.g-align .group-name { padding-right: 16px; }
.g-number { width: 139px; }
.g-number .group-name { padding-right: 18px; }
.g-styles { width: 189px; }
.g-cells { width: 135px; }
.g-edit { width: 229px; }

.big {
  display: flex;
  flex-direction: column;
  align-items: center;
  padding-top: 4px;
  line-height: 15px;
  white-space: nowrap;
}
.big svg { height: 30px; }
.big > span { margin-top: 2px; }
.big > .arrow { margin: 6px 0 0 4px; }
.big .second { display: flex; align-items: center; gap: 4px; margin-top: 0; }
.g-clip .big { width: 50px; padding-left: 3px; }
.g-clip .big span { margin-right: 3px; }
.g-clip .big .arrow { margin-left: 0; }
.g-styles .big:nth-child(1) { width: 60px; }
.g-styles .big:nth-child(2) { width: 56px; }
.g-styles .big:nth-child(3) { width: 70px; }
.g-cells .big:nth-child(1) { width: 48px; }
.g-cells .big:nth-child(2) { width: 39px; }
.g-cells .big:nth-child(3) { width: 44px; }
.g-edit .big { width: 65px; }

.small-list { margin-top: -2px; }
.small-list div {
  display: flex;
  align-items: center;
  height: 23px;
}
.small-list svg { width: 15px; margin-right: 3px; }
.small-list .arrow { margin-left: 4px; }
.small-list .arrow.far { margin-left: 10px; }
.g-clip .small-list .arrow { margin-left: 10px; }
.g-edit .small-list { width: 93px; padding-left: 7px; }

.row { display: flex; align-items: center; height: 23px; margin-top: 7px; }
.row + .row { margin-top: 8px; }
.combo {
  display: flex;
  align-items: center;
  justify-content: space-between;
  height: 23px;
  padding: 0 4px 0 2px;
  border: 1px solid #ababab;
  color: #000;
}
.font-row { padding-left: 4px; }
.font-row .combo:nth-child(1) { width: 158px; }
.font-row .combo:nth-child(2) { width: 40px; margin-left: -1px; }
.format { width: 131px; margin-left: 3px; }
.grow { display: flex; margin-left: 6px; font: 600 14px/20px "Open Sans", sans-serif; color: #555; }
.grow svg { margin-top: 2px; }
.grow.less { margin-left: 9px; font-size: 12px; line-height: 22px; }
.sep { width: 1px; height: 20px; background: #e1e1e1; }
.style-row {
  display: grid;
  grid-template-columns: 22px 22px 22px 12px 10px 21px 12px 12px 19px 12px 24px 8px 14px 19px 12px;
  place-items: center;
  padding-left: 3px;
}
.style-row b { font: 700 12px/16px "Open Sans", sans-serif; color: #444; }
.style-row .ital { font-family: "Liberation Serif", serif; font-style: italic; font-size: 14px; }
.style-row .under { line-height: 12px; border-bottom: 1px solid #444; }
.font-colour {
  width: 16px;
  height: 16px;
  border-bottom: 4px solid #f00;
  font: 700 14px/12px "Open Sans", sans-serif;
  text-align: center;
  color: #555;
}
.phonetic { font-size: 8.5px; line-height: 8px; text-align: center; }
.phonetic em { display: block; font-size: 9px; font-weight: 700; line-height: 9px; color: #3f74ae; }

.align-grid {
  display: grid;
  grid-template-columns: 22px 22px 22px 8px 23px 23px;
  grid-template-rows: 23px 23px;
  row-gap: 8px;
  place-items: center;
  padding: 7px 0 0 4px;
  height: 63px;
}
.align-grid .lead { justify-self: start; margin-left: 1px; }
.cell { display: flex; align-items: center; justify-content: center; width: 22px; height: 23px; }
.cell.on { background: #9fd5b7; }
.ab { font: 11px "Open Sans", sans-serif; fill: #555; }
.wrap-list { margin: 6px 0 0 3px; padding-left: 7px; border-left: 1px solid #e1e1e1; height: 55px; }
.wrap-list div { display: flex; align-items: center; gap: 2px; height: 24px; }
.wrap-list div + div { margin-top: 7px; }
.wrap-list svg { width: 16px; }
.wrap-list .arrow { margin-left: 9px; }

.number-row {
  display: grid;
  grid-template-columns: 19px 15px 22px 19px 14px 12px 30px;
  place-items: center;
  padding-left: 4px;
}
.percent { font: 15px/20px "Open Sans", sans-serif; color: #444; }
.decimals { display: flex; flex-direction: column; align-items: flex-end; width: 16px; font: 8.5px/8px "Open Sans", sans-serif; }
.decimals span { display: flex; align-items: center; }
.az { font: 700 15px "Open Sans", sans-serif; }
.az.a { fill: #3f74ae; }
.az.z { fill: #8c57ae; }
.collapse { margin: 79px 10px 0 auto; }

/* ---------- Formula bar ---------- */
.formula-bar {
  display: flex;
  align-items: center;
  height: 44px;
  padding: 0 5px;
}
.name-box {
  display: flex;
  align-items: center;
  justify-content: space-between;
  width: 102px;
  height: 24px;
  padding: 2px 6px 0 5px;
  border: 1px solid #c6c6c6;
  font: 13.8px "Liberation Mono", monospace;
}
.name-box .arrow { width: 7px; height: 4px; margin-bottom: 3px; }
.formula-bar .grip { margin: 0 14px; }
.fx-box {
  display: flex;
  align-items: center;
  justify-content: space-between;
  width: 110px;
  height: 24px;
  padding: 0 12px;
  border: 1px solid #c6c6c6;
}
.fx { font: italic 700 15px "Liberation Serif", serif; color: #666; }
.fx small { font-size: 12px; }
.formula-input {
  display: flex;
  align-items: center;
  justify-content: flex-end;
  flex: 1;
  height: 24px;
  margin-left: 3px;
  padding-right: 4px;
  border: 1px solid #c6c6c6;
}

/* ---------- Sheet ---------- */
.sheet-area { display: flex; height: 471px; }
.sheet-clip { width: 1366px; overflow: hidden; border-bottom: 1px solid #ababab; }
.sheet {
  width: 1366px;
  table-layout: fixed;
  border-collapse: separate;
  border-spacing: 0;
  font-family: "Liberation Mono", "Noto Sans CJK SC", monospace;
}
.c-no { width: 34px; }
.c-11 { width: 12px; }
.c-72 { width: 72px; }
.c-86 { width: 86px; }
.c-114 { width: 114px; }
.c-125 { width: 125px; }
.c-147 { width: 147px; }
.c-192 { width: 192px; }
.c-211 { width: 211px; }
.sheet th, .sheet td {
  height: 20px;
  padding: 0;
  border: 0 solid var(--grid);
  border-width: 0 1px 1px 0;
  text-align: center;
  font-size: 13.8px;
  font-weight: 400;
  line-height: 14px;
  letter-spacing: -.28px;
  white-space: nowrap;
}
.sheet th { padding-top: 5px; border-right-color: #ababab; border-bottom-color: #e6e6e6; color: #444; }
.sheet td:last-child { border-right-color: #ababab; }
.sheet .letters th { height: 18px; padding-top: 3px; border-color: #e0e0e0; border-bottom-color: #ababab; font-family: "Liberation Serif", serif; font-size: 13.5px; line-height: 13px; letter-spacing: 0; }
.sheet .letters .active { background: #e1e1e1; color: var(--green); border-right: 1px solid #cfcfcf; border-bottom: 2px solid var(--green); }
.sheet .letters .corner { background: linear-gradient(135deg, transparent 50%, #dcdcdc 50%) 20px 4px / 10px 10px no-repeat; }
.sheet .letters th:last-child { border-right: 0; }
.sheet tr:not(.letters) .active { background: #e1e1e1; color: var(--green); border-right: 2px solid var(--green); }
.sheet .r-title th { height: 30px; padding-top: 15px; }
.sheet .ink, .sheet .r-data td:nth-child(-n+9) { border-color: #000; color: #000; }
.sheet .r-title .ink {
  height: 30px;
  font: 500 24px/28px "Noto Sans CJK SC", sans-serif;
  letter-spacing: .4px;
}
.sheet .r-head .ink { font-family: "Noto Sans CJK SC", sans-serif; font-weight: 350; font-size: 15px; line-height: 17px; letter-spacing: 0; }
.sheet .r-head .qq { padding-top: 2px; font-family: "Liberation Mono", monospace; font-size: 13.8px; }
.sheet .r-data th, .sheet .r-data td { height: 18px; padding-top: 3px; }
.sheet .r-data .cn { padding: 0; font-family: "Noto Sans CJK SC", sans-serif; font-weight: 350; font-size: 14.5px; line-height: 17px; letter-spacing: 0; }
.sheet .r-data td.last:nth-child(9) { border-right-color: #fff; }
.sheet .flag { background: linear-gradient(135deg, #0a7d12 50%, transparent 50%) 0 0 / 6px 6px no-repeat; }
.sheet .selected { position: relative; }
.selected i {
  position: absolute;
  inset: -2px -2px -2px -2px;
  border: 2px solid var(--green);
}
.selected i::after {
  content: "";
  position: absolute;
  right: -3px;
  bottom: -3px;
  width: 6px;
  height: 6px;
  background: var(--green);
  border: solid #fff;
  border-width: 1px 0 0 1px;
}

/* ---------- Scrollbars ---------- */
.vscroll { display: flex; flex-direction: column; width: 15px; margin: 2px 0 0 3px; height: 469px; }
.scroll-btn {
  display: flex;
  align-items: center;
  justify-content: center;
  width: 15px;
  height: 15px;
  border: 1px solid #ababab;
  background: #fff;
  flex: none;
}
.vthumb { height: 420px; margin-top: -1px; border: 1px solid #ababab; }
.vtrack { height: 21px; background: #f0f0f0; }
.tri { display: block; background: #666; }
.up { width: 7px; height: 4px; clip-path: polygon(50% 0, 100% 100%, 0 100%); }
.down { width: 7px; height: 4px; clip-path: polygon(0 0, 100% 0, 50% 100%); }
.left { width: 4px; height: 8px; clip-path: polygon(100% 0, 100% 100%, 0 50%); }
.right { width: 4px; height: 8px; clip-path: polygon(0 0, 100% 50%, 0 100%); }
.faint { background: #c6c6c6; }

/* ---------- Sheet tabs ---------- */
.sheet-tabs {
  display: flex;
  align-items: center;
  height: 27px;
  background: #f5f5f5;
}
.tab-nav {
  display: flex;
  align-items: center;
  justify-content: space-between;
  width: 101px;
  height: 20px;
  padding: 0 40px 0 27px;
  border-right: 1px solid #ababab;
}
.sheet-tab {
  width: 114px;
  height: 27px;
  padding-left: 11px;
  font-size: 12.8px;
  line-height: 23px;
  white-space: nowrap;
}
.sheet-tab.current {
  width: 115px;
  height: 26px;
  margin: -4px 0 0;
  border: solid #ababab;
  border-width: 0 1px;
  border-bottom: 2px solid var(--green);
  line-height: 25px;
  background: #fff;
  color: var(--green);
}
.add-sheet { margin: -2px 0 0 33px; }
.sheet-tabs .grip { margin: -1px 0 0 auto; }
.hscroll { display: flex; width: 517px; margin: 0 21px 0 16px; background: #e8e8e8; }
.hthumb { width: 447px; margin-left: -1px; border: 1px solid #ababab; background: #fff; }
.htrack { flex: 1; }

/* ---------- Status bar ---------- */
.status {
  display: flex;
  align-items: center;
  height: 23px;
  padding-bottom: 1px;
  background: var(--green);
  color: #fff;
}
.ready { flex: 1; padding: 0 0 3px 7px; }
.view { display: flex; align-items: center; justify-content: center; width: 38px; height: 21px; }
.view.on { padding-right: 1px; background: #0a6332; }
.view svg { margin-top: -1px; }
.zoom { margin-left: 4px; }
.percent-zoom { width: 52px; margin-left: 14px; padding-bottom: 3px; font-size: 12.3px; }

/* ---------- Downloads shelf ---------- */
.shelf {
  display: flex;
  align-items: center;
  height: 49px;
  padding-right: 12px;
  border-top: 1px solid #b6b4b6;
}
.download {
  display: flex;
  align-items: center;
  width: 227px;
  height: 36px;
  padding: 0 18px 0 16px;
  border-right: 1px solid #d0d0d0;
  font-size: 12.9px;
  color: #3c4043;
}
.download:first-child { width: 231px; padding-left: 20px; }
.download svg:first-child { margin-bottom: 4px; }
.download span { flex: 1; padding: 3px 0 0 12px; white-space: nowrap; }
.show-all {
  width: 80px;
  height: 32px;
  margin: 0 13px 0 auto;
  border: 1px solid #dadce0;
  border-radius: 4px;
  line-height: 30px;
  text-align: center;
  color: #333;
}
.shelf > svg { margin-top: -2px; }

.watermark {
  position: absolute;
  left: 1263px;
  top: 953px;
  font: 16px/20px "Liberation Sans", sans-serif;
  color: rgba(160, 160, 160, .4);
  white-space: nowrap;
}
```
